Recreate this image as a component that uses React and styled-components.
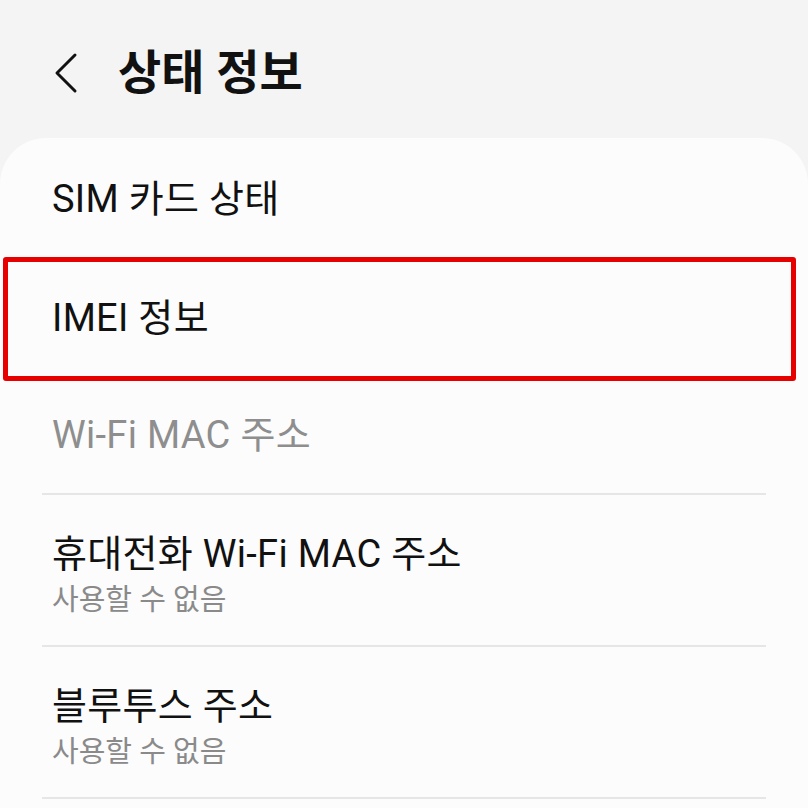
import React from "react";
import styled, { createGlobalStyle } from "styled-components";

const GlobalStyle = createGlobalStyle`
  html, body {
    margin: 0;
    padding: 0;
    background: #f4f4f4;
  }
  body {
    font-family: Roboto, "Noto Sans CJK KR", sans-serif;
    overflow: hidden;
  }
`;

const Screen = styled.div`
  width: 808px;
  height: 808px;
  background: #f4f4f4;
  display: flex;
  flex-direction: column;
  overflow: hidden;
`;

const Header = styled.div`
  height: 138px;
  display: flex;
  align-items: center;
  padding: 8px 0 0 53px;
  box-sizing: border-box;
  gap: 39px;
`;

const Title = styled.h1`
  margin: 0;
  font-size: 47px;
  line-height: 56px;
  font-weight: 700;
  color: #111;
`;

const Card = styled.div`
  flex: 1;
  background: #fcfcfc;
  border-radius: 46px 46px 0 0;
  display: flex;
  flex-direction: column;
`;

const Row = styled.div`
  position: relative;
  height: ${(p) => p.$h}px;
  display: flex;
  flex-direction: column;
  justify-content: center;
  padding: ${(p) => (p.$sub ? "8px" : "0")} 52px 0;
  box-sizing: border-box;
`;

const Label = styled.div`
  font-size: 38px;
  line-height: 44px;
  letter-spacing: 0.3px;
  color: ${(p) => (p.$dim ? "#8e8e8e" : "#111")};
`;

const Sub = styled.div`
  font-size: 29px;
  line-height: 34px;
  color: #8a8a8a;
  margin-top: 7px;
`;

const Divider = styled.div`
  height: 2px;
  background: #e6e6e6;
  margin: 0 42px;
`;

const Highlight = styled.div`
  position: absolute;
  left: 3px;
  right: 12px;
  top: -2px;
  bottom: -4px;
  border: 5px solid #e60000;
  border-radius: 3px;
  pointer-events: none;
`;

const Back = () => (
  <svg width="26" height="42" viewBox="0 0 26 42">
    <path d="M22 3 L4 21 L22 39" fill="none" stroke="#111" strokeWidth="3" strokeLinecap="round" strokeLinejoin="round" />
  </svg>
);

export default function App() {
  return (
    <Screen>
      <GlobalStyle />
      <Header>
        <Back />
        <Title>상태 정보</Title>
      </Header>
      <Card>
        <Row $h={121}>
          <Label>SIM 카드 상태</Label>
        </Row>
        <Row $h={118}>
          <Label>IMEI 정보</Label>
          <Highlight />
        </Row>
        <Row $h={116}>
          <Label $dim>Wi-Fi MAC 주소</Label>
        </Row>
        <Divider />
        <Row $h={150} $sub>
          <Label>휴대전화 Wi-Fi MAC 주소</Label>
          <Sub>사용할 수 없음</Sub>
        </Row>
        <Divider />
        <Row $h={150} $sub>
          <Label>블루투스 주소</Label>
          <Sub>사용할 수 없음</Sub>
        </Row>
        <Divider />
      </Card>
    </Screen>
  );
}
